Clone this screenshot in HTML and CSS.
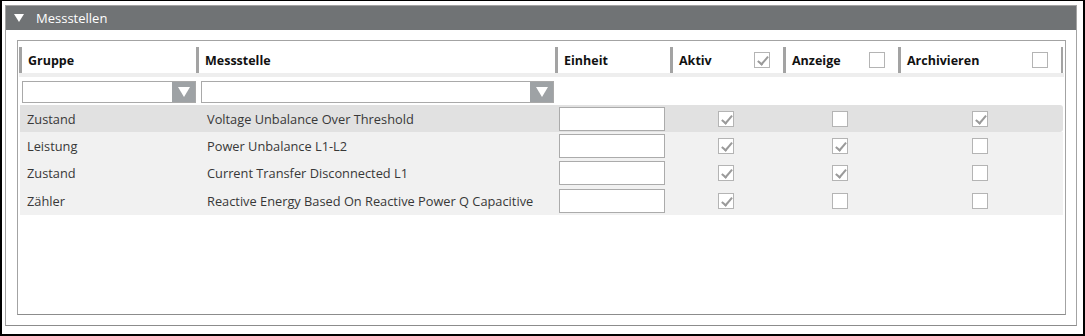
FILE: index.html
```html
<!DOCTYPE html>
<html lang="de">
<head>
    <meta charset="UTF-8">
    <title>Messstellen</title>
    <link rel="stylesheet" href="styles.css">
</head>
<body>
<div class="frame">
    <div class="panel">
        <div class="panel-head">
            <span class="toggle"></span>
            <span class="panel-title">Messstellen</span>
        </div>
        <div class="panel-body">
            <div class="grid">
                <div class="grid-head">
                    <div class="hcell"><span>Gruppe</span></div>
                    <div class="hcell"><span>Messstelle</span></div>
                    <div class="hcell"><span>Einheit</span></div>
                    <div class="hcell"><span>Aktiv</span><span class="chk checked"></span></div>
                    <div class="hcell"><span>Anzeige</span><span class="chk"></span></div>
                    <div class="hcell last"><span>Archivieren</span><span class="chk"></span></div>
                </div>
                <div class="grid-filter">
                    <div class="combo first"><span class="combo-arrow"></span></div>
                    <div class="combo second"><span class="combo-arrow"></span></div>
                </div>
                <div class="row selected">
                    <div class="cell group">Zustand</div>
                    <div class="cell">Voltage Unbalance Over Threshold</div>
                    <div class="cell"><input class="unit" type="text"></div>
                    <div class="cell box"><span class="chk checked"></span></div>
                    <div class="cell box"><span class="chk"></span></div>
                    <div class="cell box"><span class="chk checked"></span></div>
                </div>
                <div class="row">
                    <div class="cell group">Leistung</div>
                    <div class="cell">Power Unbalance L1-L2</div>
                    <div class="cell"><input class="unit" type="text"></div>
                    <div class="cell box"><span class="chk checked"></span></div>
                    <div class="cell box"><span class="chk checked"></span></div>
                    <div class="cell box"><span class="chk"></span></div>
                </div>
                <div class="row">
                    <div class="cell group">Zustand</div>
                    <div class="cell">Current Transfer Disconnected L1</div>
                    <div class="cell"><input class="unit" type="text"></div>
                    <div class="cell box"><span class="chk checked"></span></div>
                    <div class="cell box"><span class="chk checked"></span></div>
                    <div class="cell box"><span class="chk"></span></div>
                </div>
                <div class="row">
                    <div class="cell group">Zähler</div>
                    <div class="cell">Reactive Energy Based On Reactive Power Q Capacitive</div>
                    <div class="cell"><input class="unit" type="text"></div>
                    <div class="cell box"><span class="chk checked"></span></div>
                    <div class="cell box"><span class="chk"></span></div>
                    <div class="cell box"><span class="chk"></span></div>
                </div>
            </div>
        </div>
    </div>
</div>
</body>
</html>
```

FILE: styles.css
```css
:root {
    --line: #a3a3a3;
    --head-bg: #707375;
    --row-sel: #e1e1e1;
    --row-bg: #f1f1f1;
    --text: #383838;
    --cols: 177px 359px 115px 113px 115px 165px;
}

* {
    margin: 0;
    padding: 0;
    box-sizing: border-box;
    font-family: 'Open Sans', sans-serif;
}

body {
    background: #fff;
    color: var(--text);
    font-size: 12.8px;
}

.frame {
    width: 1085px;
    height: 336px;
    border: 2px solid #000;
    border-top-width: 1px;
    padding: 4px 6px 8px 3px;
}

.panel {
    height: 100%;
    border: 1px solid var(--line);
    border-bottom-color: #8c8c8c;
    display: flex;
    flex-direction: column;
}

.panel-head {
    height: 24px;
    background: var(--head-bg);
    color: #fff;
    display: flex;
    align-items: center;
    padding-left: 8px;
}

.toggle {
    width: 0;
    height: 0;
    border-left: 5px solid transparent;
    border-right: 5px solid transparent;
    border-top: 8px solid #fff;
    margin-right: 12px;
}

.panel-title {
    font-size: 13px;
}

.panel-body {
    flex: 1;
    padding: 10px 10px 10px 11px;
}

.grid {
    height: 100%;
    border: 1px solid var(--line);
    border-bottom-color: #8c8c8c;
    padding-left: 1px;
}

.grid-head {
    display: grid;
    grid-template-columns: var(--cols);
    align-items: end;
    border-bottom: 4px solid #eeeeee;
    margin-right: 1px;
    height: 36px;
}

.hcell {
    height: 26px;
    border-left: 3px solid var(--line);
    display: flex;
    align-items: center;
    justify-content: space-between;
    padding: 0 13px 0 6px;
    font-weight: 700;
    font-size: 12.5px;
    color: #111;
}

.hcell.last {
    border-right: 2px solid var(--line);
}

.grid-filter {
    display: flex;
    height: 28px;
    padding-top: 4px;
}

.combo {
    height: 22px;
    border: 1px solid #a9a9a9;
    background: #fff;
    display: flex;
    justify-content: flex-end;
}

.combo.first {
    width: 174px;
    margin-left: 3px;
}

.combo.second {
    width: 353px;
    margin-left: 5px;
}

.combo-arrow {
    width: 23px;
    height: 100%;
    background: #9ea2a5;
    display: flex;
    align-items: center;
    justify-content: center;
}

.combo-arrow::before {
    content: '';
    border-left: 6px solid transparent;
    border-right: 6px solid transparent;
    border-top: 10px solid #fff;
}

.row {
    display: grid;
    grid-template-columns: var(--cols);
    height: 27.4px;
    align-items: center;
    background: var(--row-bg);
    margin-left: 1px;
    margin-right: 2px;
}

.row.selected {
    background: var(--row-sel);
    border-radius: 0 3px 3px 0;
}

.cell {
    padding-left: 10px;
    white-space: nowrap;
}

.cell.group {
    padding-left: 7px;
}

.cell.box {
    padding-left: 0;
    display: flex;
    justify-content: center;
}

.unit {
    display: block;
    width: 106px;
    height: 24px;
    margin-left: -7px;
    border: 1px solid #ababab;
    background: #fff;
}

.chk {
    display: inline-block;
    width: 16px;
    height: 16px;
    border: 1px solid #b4b4b4;
    background: #fff;
    position: relative;
}

.cell .chk {
    margin-right: 4px;
}

.chk.checked::after {
    content: '';
    position: absolute;
    left: 5px;
    top: 1px;
    width: 4px;
    height: 9px;
    border-right: 2px solid #9a9a9a;
    border-bottom: 2px solid #9a9a9a;
    transform: rotate(40deg);
}
```
